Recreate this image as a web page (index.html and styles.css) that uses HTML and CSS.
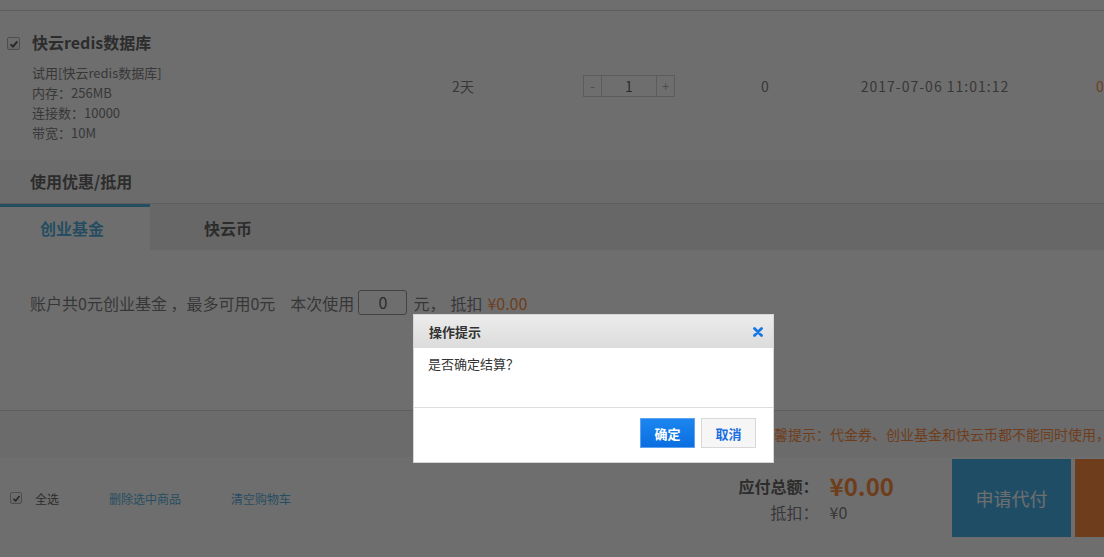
FILE: index.html
```html
<!DOCTYPE html>
<html lang="zh-CN">
<head>
    <meta charset="UTF-8">
    <title>购物车 - 快云</title>
    <link rel="stylesheet" href="styles.css">
</head>
<body>

    <div class="cart">
        <div class="cart-head"></div>

        <!-- 商品行 -->
        <div class="item-row">
            <div class="col-check">
                <span class="check"><svg viewBox="0 0 12 12" width="10" height="10"><path d="M2 6.5 L4.8 9.2 L10 2.8" fill="none" stroke="#222" stroke-width="2.2"/></svg></span>
            </div>
            <div class="col-info">
                <div class="item-title">快云redis数据库</div>
                <div class="item-desc">
                    <div>试用[快云redis数据库]</div>
                    <div>内存：256MB</div>
                    <div>连接数：10000</div>
                    <div>带宽：10M</div>
                </div>
            </div>
            <div class="col">2天</div>
            <div class="col">
                <div class="stepper">
                    <span class="step-btn minus">-</span>
                    <span class="step-num">1</span>
                    <span class="step-btn plus">+</span>
                </div>
            </div>
            <div class="col col-small">0</div>
            <div class="col col-date">2017-07-06 11:01:12</div>
            <div class="col col-price">0</div>
        </div>

        <!-- 优惠 -->
        <div class="discount">
            <div class="discount-head">使用优惠/抵用</div>
            <div class="tabs">
                <div class="tab active">创业基金</div>
                <div class="tab">快云币</div>
            </div>
            <div class="discount-body">
                <span>账户共0元创业基金 ，最多可用0元</span>
                <span class="use-label">本次使用</span>
                <span class="use-input">0</span>
                <span>元，</span>
                <span class="deduct-label">抵扣</span>
                <span class="orange">¥0.00</span>
            </div>
        </div>

        <div class="tip-bar">温馨提示：代金券、创业基金和快云币都不能同时使用，敬请谅解</div>

        <!-- 结算栏 -->
        <div class="checkout-bar">
            <div class="bar-left">
                <span class="check small"><svg viewBox="0 0 12 12" width="9" height="9"><path d="M2 6.5 L4.8 9.2 L10 2.8" fill="none" stroke="#222" stroke-width="2.2"/></svg></span>
                <span class="select-all">全选</span>
                <a class="bar-link" href="#">删除选中商品</a>
                <a class="bar-link" href="#">清空购物车</a>
            </div>
            <div class="totals">
                <span class="total-label">应付总额：</span>
                <span class="total-price">¥0.00</span>
                <span class="deduct-row">抵扣：</span>
                <span class="deduct-val">¥0</span>
            </div>
            <button class="btn-pay">申请代付</button>
            <button class="btn-settle">结算</button>
        </div>
    </div>

    <!-- 遮罩和弹窗 -->
    <div class="mask"></div>
    <div class="dialog">
        <div class="dialog-head">
            <span class="dialog-title">操作提示</span>
            <svg class="dialog-close" viewBox="0 0 10 10" width="10" height="10"><path d="M1.5 1.5 L8.5 8.5 M8.5 1.5 L1.5 8.5" stroke="#1677e6" stroke-width="2.8" stroke-linecap="round"/></svg>
        </div>
        <div class="dialog-body">是否确定结算？</div>
        <div class="dialog-foot">
            <button class="dlg-btn ok">确定</button>
            <button class="dlg-btn cancel">取消</button>
        </div>
    </div>

</body>
</html>
```

FILE: styles.css
```css
html, body {
    overflow: hidden;
}
body {
    margin: 0;
    font-family: "Noto Sans CJK SC", "Microsoft YaHei", sans-serif;
    color: #333;
    background: #fff;
}
.cart {
    width: 1194px;
}
.cart-head {
    height: 10px;
    border-bottom: 1px solid #ccc;
}

/* 商品行 */
.item-row {
    display: grid;
    grid-template-columns: 32px 368px 126px 208px 62px 278px 52px;
    height: 149px;
}
.col-check {
    padding: 26px 0 0 7px;
}
.check {
    display: flex;
    align-items: center;
    justify-content: center;
    width: 11px;
    height: 11px;
    border: 1px solid #999;
    border-radius: 2px;
    background: linear-gradient(#fff, #e6e6e6);
}
.check.small {
    width: 10px;
    height: 10px;
}
.col-info {
    padding-top: 20px;
}
.item-title {
    font-size: 16px;
    font-weight: bold;
    line-height: 22px;
}
.item-desc {
    margin-top: 10px;
    font-size: 13px;
    line-height: 20px;
    color: #555;
}
.col {
    display: flex;
    align-items: center;
    justify-content: center;
    font-size: 14px;
    color: #555;
}
.col-date {
    letter-spacing: 1px;
}
.col-price {
    color: #f60;
}
.stepper {
    display: flex;
    height: 20px;
    border: 1px solid #c8c8c8;
    margin-right: 2px;
}
.step-btn {
    width: 17px;
    text-align: center;
    line-height: 20px;
    font-size: 13px;
    color: #999;
}
.minus {
    border-right: 1px solid #c8c8c8;
}
.plus {
    border-left: 1px solid #c8c8c8;
}
.step-num {
    width: 54px;
    text-align: center;
    line-height: 20px;
    font-size: 14px;
    color: #333;
}

/* 优惠 */
.discount-head {
    height: 43px;
    line-height: 43px;
    padding-left: 30px;
    font-size: 16px;
    font-weight: bold;
    background: #f5f5f5;
    border-bottom: 1px solid #ccc;
}
.tabs {
    display: flex;
    height: 46px;
    background: #e8e8e8;
}
.tab {
    padding-left: 54px;
    line-height: 43px;
    font-size: 16px;
    font-weight: bold;
    border-top: 3px solid transparent;
}
.tab.active {
    width: 110px;
    padding-left: 40px;
    background: #fff;
    color: #1a9ad6;
    border-top-color: #1a9ad6;
}
.discount-body {
    height: 160px;
    padding: 40px 0 0 30px;
    box-sizing: border-box;
    display: flex;
    align-items: flex-start;
    font-size: 16px;
    line-height: 26px;
    color: #555;
}
.use-label {
    margin-left: 15px;
}
.use-input {
    width: 47px;
    height: 23px;
    line-height: 23px;
    margin: 0 6px 0 4px;
    border: 1px solid #777;
    border-radius: 3px;
    text-align: center;
    color: #333;
}
.deduct-label {
    margin: 0 5px 0 5px;
}
.orange {
    color: #ff6a00;
}

.tip-bar {
    height: 46px;
    line-height: 46px;
    border-top: 1px solid #ccc;
    background: #f5f5f5;
    font-size: 14px;
    color: #ff6a00;
    text-align: right;
    padding-right: 28px;
}

/* 结算栏 */
.checkout-bar {
    display: flex;
    align-items: center;
    height: 78px;
    margin-top: 2px;
}
.bar-left {
    display: flex;
    align-items: center;
    padding-left: 10px;
    font-size: 12px;
}
.select-all {
    margin-left: 13px;
}
.bar-link {
    margin-left: 50px;
    color: #1a9ad6;
    text-decoration: none;
}
.totals {
    margin-left: auto;
    margin-right: 58px;
    display: grid;
    grid-template-columns: auto auto;
    column-gap: 11px;
    align-items: center;
    font-size: 16px;
}
.total-label {
    font-weight: bold;
    text-align: right;
    line-height: 28px;
}
.total-price {
    font-size: 24px;
    font-weight: bold;
    color: #ff6a00;
    line-height: 28px;
}
.deduct-row {
    text-align: right;
    line-height: 24px;
    color: #555;
}
.deduct-val {
    color: #555;
}
.btn-pay, .btn-settle {
    width: 119px;
    height: 78px;
    border: none;
    font-family: inherit;
    font-size: 18px;
    color: #fff;
    cursor: pointer;
}
.btn-pay {
    background: #0a9ae5;
}
.btn-settle {
    margin-left: 4px;
    background: #ff6a00;
}

/* 弹窗 */
.mask {
    position: fixed;
    inset: 0;
    background: rgba(42, 42, 42, 0.68);
}
.dialog {
    position: fixed;
    left: 413px;
    top: 314px;
    width: 359px;
    border: 1px solid #d6d6d6;
    background: #fff;
    font-size: 13px;
}
.dialog-head {
    display: flex;
    align-items: center;
    justify-content: space-between;
    height: 33px;
    padding: 0 10px 0 15px;
    background: linear-gradient(#ececec, #dcdcdc);
}
.dialog-title {
    font-weight: bold;
    color: #333;
}
.dialog-body {
    height: 60px;
    padding: 6px 14px 0;
    box-sizing: border-box;
    line-height: 20px;
    border-bottom: 1px solid #ddd;
}
.dialog-foot {
    display: flex;
    justify-content: flex-end;
    gap: 6px;
    padding: 10px 17px 14px;
}
.dlg-btn {
    height: 30px;
    padding: 0;
    font-family: inherit;
    font-size: 13px;
    font-weight: bold;
    cursor: pointer;
}
.dlg-btn.ok {
    width: 55px;
    border: 1px solid #5ea3f0;
    background: linear-gradient(#1c86f0, #0a6ee0);
    color: #fff;
}
.dlg-btn.cancel {
    width: 55px;
    border: 1px solid #d8d8d8;
    background: #f6f6f6;
    color: #1a6ee0;
}
```
